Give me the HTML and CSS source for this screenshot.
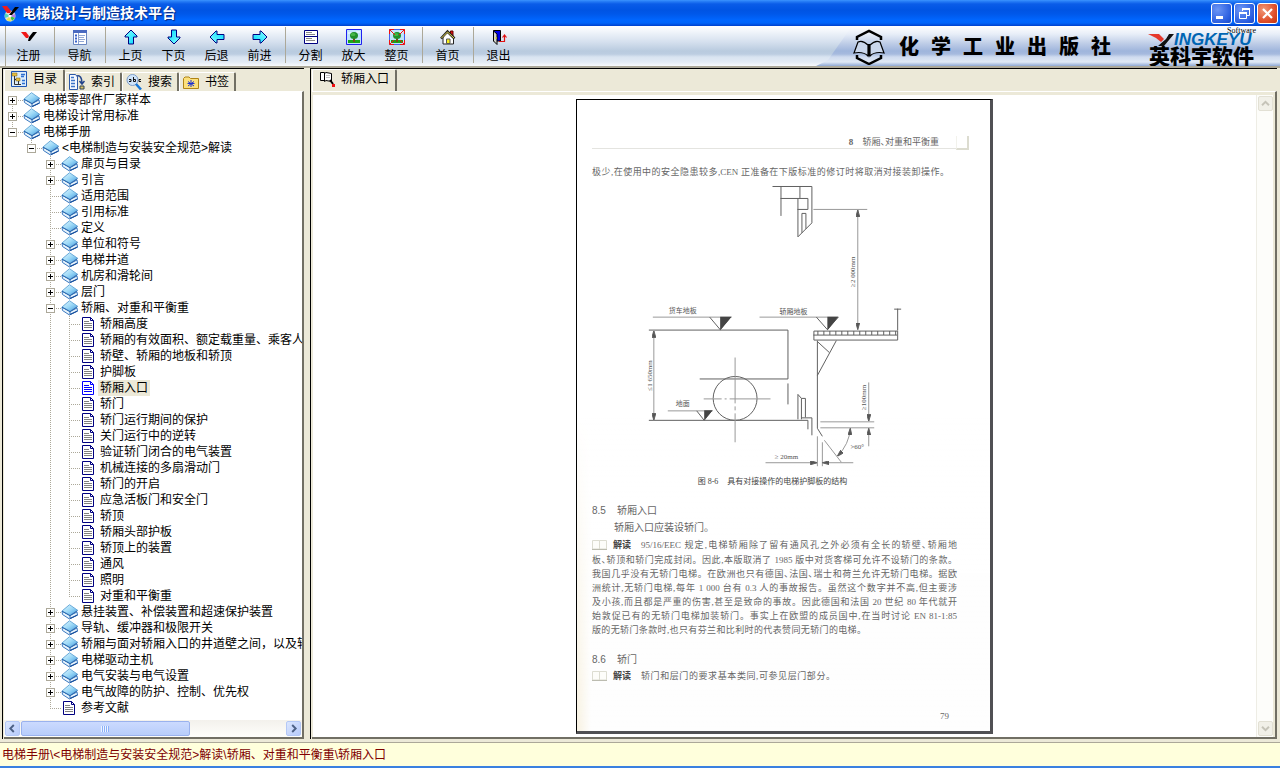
FILE: index.html
```
<!DOCTYPE html>
<html lang="zh-CN">
<head>
    <meta charset="UTF-8">
    <meta name="viewport" content="width=device-width, initial-scale=1.0">
    <title>电梯设计与制造技术平台</title>
    <link rel="stylesheet" href="styles.css">
</head>
<body>
    <!-- shared icons -->
    <svg class="defs" width="0" height="0" aria-hidden="true">
        <defs>
            <linearGradient id="cover" x1="0" y1="0" x2="1" y2="1">
                <stop offset="0" stop-color="#e4f8ff"/>
                <stop offset="0.5" stop-color="#9dd9f7"/>
                <stop offset="1" stop-color="#3f9be0"/>
            </linearGradient>
            <linearGradient id="cyan" x1="0" y1="0" x2="1" y2="1">
                <stop offset="0" stop-color="#8ff"/>
                <stop offset="1" stop-color="#00d8ff"/>
            </linearGradient>
        </defs>
        <symbol id="book" viewBox="0 0 18 16">
            <path d="M1 7 1.500 10.500 8.500 15 16.500 11 16 8 9 11.500z" fill="#e8f4fc" stroke="#3a78c0"/>
            <path d="M9 14.500 16.500 11" stroke="#174f9c" stroke-width="1.300"/>
            <path d="M8.500 0.700 16.500 6.200 9 11.200 1 7z" fill="url(#cover)" stroke="#6aaad8"/>
            <path d="M1 7.200 9 11.700 16.500 6.700M9 11.700V14.500" fill="none" stroke="#2865ad"/>
        </symbol>
        <symbol id="doc" viewBox="0 0 18 16">
            <path d="M2.500 1.500H10.500L13.500 4.500V14.500H2.500z" fill="#fff" stroke="#000080"/>
            <path d="M10.500 1.500V4.500H13.500" fill="none" stroke="#000080"/>
            <path d="M4 5.500H9M4 7.500H12M4 9.500H12M4 11.500H12" stroke="#808080"/>
        </symbol>
        <symbol id="doc-open" viewBox="0 0 18 16">
            <path d="M2.500 1.500H10.500L13.500 4.500V14.500H2.500z" fill="#fff" stroke="#0000ff"/>
            <path d="M10.500 1.500V4.500H13.500" fill="none" stroke="#0000ff"/>
            <path d="M4 5.500H9M4 7.500H12M4 9.500H12M4 11.500H12" stroke="#0000ff"/>
        </symbol>
        <symbol id="arrow" viewBox="0 0 16 16">
            <path d="M8 1 14 7V8H10.500V15H5.500V8H2V7z" fill="url(#cyan)" stroke="#000080"/>
        </symbol>
        <symbol id="tree-pic" viewBox="0 0 16 16">
            <path d="M1 1H15V15H1z" fill="#bfe4fb"/>
            <path d="M2 4H6M10 3H14" stroke="#fff"/>
            <path d="M2 11H14V14H2z" fill="#19a319"/>
            <path d="M7 8H9V13H7z" fill="#754b14"/>
            <ellipse cx="8" cy="6.500" rx="4" ry="3.500" fill="#1f8f2b"/>
            <ellipse cx="7" cy="5.500" rx="2.500" ry="1.500" fill="#45b848"/>
        </symbol>
        <symbol id="openbook" viewBox="0 0 15 10">
            <path d="M0.500 0.500H7.500V9H0.500zM7.500 0.500H14.500V9H7.500z" fill="#fdfdfa" stroke="#ddddd2"/>
            <path d="M0 9.500H15" stroke="#bcbcb0"/>
        </symbol>
    </svg>

    <header class="titlebar">
        <svg class="app-icon" viewBox="0 0 17 17">
            <circle cx="8" cy="11" r="5.500" fill="#ddd"/>
            <path d="M8 11 3 8 3 13z" fill="#4cd9c0"/>
            <path d="M8 11 4 15 9 16.500z" fill="#ece34a"/>
            <path d="M8 11 13 9 13 13z" fill="#b877e8"/>
            <path d="M8 11 10 16 13 13z" fill="#3ec43e"/>
            <circle cx="8" cy="11" r="1.500" fill="#fff"/>
            <path d="M0 1H5L9 6 8 8H5z" fill="#ee1c1c"/>
            <path d="M7 10 13 2H17L10 10z" fill="#000"/>
        </svg>
        <h1>电梯设计与制造技术平台</h1>
        <div class="window-buttons">
            <button class="win-btn" aria-label="最小化"><svg viewBox="0 0 19 19"><path d="M4 12H11V15H4z" fill="#fff"/></svg></button>
            <button class="win-btn" aria-label="还原"><svg viewBox="0 0 19 19" fill="none" stroke="#fff"><path d="M7.500 7V4.500H14.500V11.500H12"/><path d="M7 5H15" stroke-width="2"/><path d="M4.500 8.500H11.500V14.500H4.500z"/><path d="M4 9H12" stroke-width="2"/></svg></button>
            <button class="win-btn close" aria-label="关闭"><svg viewBox="0 0 19 19"><path d="M5 5 14 14M14 5 5 14" stroke="#fff" stroke-width="2.200"/></svg></button>
        </div>
    </header>

    <nav class="toolbar">
        <div class="tools">
            <button class="tool"><svg viewBox="0 0 16 16"><path d="M0 3H5L8 7 7 9H5z" fill="#f01818"/><path d="M7 12 8 8 12 3H16L9 12z" fill="#000"/></svg>注册</button>
            <span class="sep"></span>
            <button class="tool"><svg viewBox="0 0 16 16"><path d="M1.500 1.500H14.500V15.500H1.500z" fill="#fff" stroke="#6a86c0"/><path d="M1 1H15V4H1z" fill="#4a6ac0"/><path d="M3 6.500H5M3 9.500H5M3 12.500H5" stroke="#3a62c8" stroke-width="2"/><path d="M7 6.500H13M7 8.500H12M7 10.500H13M7 12.500H12" stroke="#92a8d4"/><path d="M6.500 4V15" stroke="#8ea4d0"/></svg>导航</button>
            <span class="sep"></span>
            <button class="tool"><svg viewBox="0 0 16 16"><use href="#arrow"/></svg>上页</button>
            <button class="tool"><svg class="down" viewBox="0 0 16 16"><use href="#arrow"/></svg>下页</button>
            <button class="tool"><svg class="left" viewBox="0 0 16 16"><use href="#arrow"/></svg>后退</button>
            <button class="tool"><svg class="right" viewBox="0 0 16 16"><use href="#arrow"/></svg>前进</button>
            <span class="sep"></span>
            <button class="tool"><svg viewBox="0 0 16 16"><path d="M1.500 1.500H14.500V14.500H1.500zM1 7.500H15" fill="#fff" stroke="#000080"/><path d="M3 3.500H9M3 5.500H12M3 9.500H9M3 11.500H12" stroke="#888"/></svg>分割</button>
            <button class="tool"><svg viewBox="0 0 16 16"><use href="#tree-pic"/><path d="M0.500 0.500H15.500V15.500H0.500z" fill="none" stroke="#2020f0"/></svg>放大</button>
            <button class="tool"><svg viewBox="0 0 16 16"><use href="#tree-pic"/><path d="M0.500 0.500H15.500V15.500H0.500z" fill="none" stroke="#4060f0"/><path d="M0.500 5V0.500H5M11 0.500H15.500V5M15.500 11V15.500H11M5 15.500H0.500V11M1 1 6 6M15 1 10 6M1 15 5 11M15 15 11 11" fill="none" stroke="#f01010"/></svg>整页</button>
            <span class="sep"></span>
            <button class="tool"><svg viewBox="0 0 16 16"><path d="M10.500 2H13V7L10.500 5z" fill="#e01010" stroke="#600"/><path d="M3 8V15H13.500V8L8 3z" fill="#fff" stroke="#222"/><path d="M1 9.500 7.500 2.500 14.500 9.500" fill="none" stroke="#222" stroke-width="2.500"/><path d="M1.500 9 7.500 3 14 9" fill="none" stroke="#e8dc50"/><path d="M6.500 14.500V10H10V14.500z" fill="#f4ee20" stroke="#555"/></svg>首页</button>
            <span class="sep"></span>
            <button class="tool"><svg viewBox="0 0 16 16"><path d="M2.500 1.500H9.500V12H2.500z" fill="#0000e8" stroke="#000"/><path d="M2.500 2 6 5V15.500L2.500 12z" fill="#d4d4cc" stroke="#000"/><path d="M5 8V10" stroke="#f0e000"/><path d="M8 12.500H13.500V7M11.500 8.500 13.500 6 15.500 8.500" fill="none" stroke="#e01010" stroke-width="1.200"/></svg>退出</button>
        </div>
        <div class="banner">
            <svg class="press-logo" viewBox="0 0 32 36" fill="none" stroke="#000">
                <path d="M4 11V8L16 2 28 8V11M4 26V29L16 35 28 29V26" stroke-width="2.500"/>
                <path d="M15 27V16C11 12 7 12 5 13L1 24C6 23 11 23 15 27zM17 27V16C21 12 25 12 27 13L31 24C26 23 21 23 17 27z" fill="#c9d6eb" stroke-width="1.200"/>
                <path d="M16 15V27" stroke-width="2"/>
            </svg>
            <div class="press-name"><span>化</span><span>学</span><span>工</span><span>业</span><span>出</span><span>版</span><span>社</span></div>
            <div class="brand">
                <span class="brand-soft">Software</span>
                <div class="brand-latin">
                    <svg viewBox="0 0 26 12"><path d="M0 0H11L16 5 13 8 8 4z" fill="#e5382b"/><path d="M10 12 18 5 21 0H26L16 12z" fill="#111"/></svg>
                    <span>INGKEYU</span>
                </div>
                <span class="brand-cn">英科宇软件</span>
            </div>
        </div>
    </nav>

    <main class="workspace">
        <aside class="panel side">
            <div class="tabs" role="tablist">
                <button class="tab active" role="tab"><svg viewBox="0 0 16 16"><path d="M0.500 0.500H15.500V15.500H0.500z" fill="#dcecfb" stroke="#1c54b4"/><path d="M1 2H6V5H1zM5 7H9V10H5z" fill="#e8c040" stroke="#76621a" stroke-width=".5"/><path d="M3.500 5V13.500H10M7.500 10V13M5 8.500H3.500" fill="none" stroke="#333"/><path d="M10 3.500H14M10 5.500H13M11 9.500H14M11 12.500H14" stroke="#2c6fd0" stroke-width="1.500"/></svg>目录</button>
                <button class="tab" role="tab"><svg viewBox="0 0 16 16"><path d="M0.500 0.500H6.500L8.500 3V15.500H0.500z" fill="#f4f8ff" stroke="#2c58a8"/><path d="M2 3.500H5M2 6.500H6M2 9.500H6M2 12.500H6" stroke="#3c74c8" stroke-width="1.500"/><path d="M8 2C11 1 13 4 13 9M10.500 7 13 10 15.500 7" fill="none" stroke="#24458c" stroke-width="1.500"/><path d="M11 12H15V15H11z" fill="#d8c060" stroke="#345"/></svg>索引</button>
                <button class="tab" role="tab"><svg viewBox="0 0 16 16"><circle cx="6.500" cy="6" r="5.500" fill="#cfe4fa" stroke="#7d9cc8"/><path d="M10 10 15 15.500" stroke="#1878d8" stroke-width="2.500"/><path d="M3 7.500H5V5.500H3M7.500 3V7.500H9.500V5.500H7.500M15 5.500H13V7.500H15" fill="none" stroke="#111"/></svg>搜索</button>
                <button class="tab" role="tab"><svg viewBox="0 0 16 16"><path d="M0.500 14.500V4.500L2 3H6L7.500 4.500H15.500V14.500z" fill="#fbe07c" stroke="#b08414"/><path d="M8 6V13M5 7.500 11 12M11 7.500 5 12M4.500 9.500H11.500" stroke="#1c30d0"/></svg>书签</button>
            </div>
            <div class="page">
                <ul class="tree">
                    <li><div class="row"><button class="toggle plus" aria-label="展开"></button><svg><use href="#book"/></svg><a href="#">电梯零部件厂家样本</a></div></li>
                    <li><div class="row"><button class="toggle plus" aria-label="展开"></button><svg><use href="#book"/></svg><a href="#">电梯设计常用标准</a></div></li>
                    <li><div class="row"><button class="toggle" aria-label="折叠"></button><svg><use href="#book"/></svg><a href="#">电梯手册</a></div>
                        <ul>
                            <li><div class="row"><button class="toggle" aria-label="折叠"></button><svg><use href="#book"/></svg><a href="#">&lt;电梯制造与安装安全规范&gt;解读</a></div>
                                <ul>
                                    <li><div class="row"><button class="toggle plus" aria-label="展开"></button><svg><use href="#book"/></svg><a href="#">扉页与目录</a></div></li>
                                    <li><div class="row"><button class="toggle plus" aria-label="展开"></button><svg><use href="#book"/></svg><a href="#">引言</a></div></li>
                                    <li><div class="row leaf"><svg><use href="#book"/></svg><a href="#">适用范围</a></div></li>
                                    <li><div class="row leaf"><svg><use href="#book"/></svg><a href="#">引用标准</a></div></li>
                                    <li><div class="row leaf"><svg><use href="#book"/></svg><a href="#">定义</a></div></li>
                                    <li><div class="row"><button class="toggle plus" aria-label="展开"></button><svg><use href="#book"/></svg><a href="#">单位和符号</a></div></li>
                                    <li><div class="row"><button class="toggle plus" aria-label="展开"></button><svg><use href="#book"/></svg><a href="#">电梯井道</a></div></li>
                                    <li><div class="row"><button class="toggle plus" aria-label="展开"></button><svg><use href="#book"/></svg><a href="#">机房和滑轮间</a></div></li>
                                    <li><div class="row"><button class="toggle plus" aria-label="展开"></button><svg><use href="#book"/></svg><a href="#">层门</a></div></li>
                                    <li><div class="row"><button class="toggle" aria-label="折叠"></button><svg><use href="#book"/></svg><a href="#">轿厢、对重和平衡重</a></div>
                                        <ul>
                                            <li><div class="row leaf"><svg><use href="#doc"/></svg><a href="#">轿厢高度</a></div></li>
                                            <li><div class="row leaf"><svg><use href="#doc"/></svg><a href="#">轿厢的有效面积、额定载重量、乘客人数</a></div></li>
                                            <li><div class="row leaf"><svg><use href="#doc"/></svg><a href="#">轿壁、轿厢的地板和轿顶</a></div></li>
                                            <li><div class="row leaf"><svg><use href="#doc"/></svg><a href="#">护脚板</a></div></li>
                                            <li><div class="row leaf"><svg><use href="#doc-open"/></svg><a href="#" class="selected">轿厢入口</a></div></li>
                                            <li><div class="row leaf"><svg><use href="#doc"/></svg><a href="#">轿门</a></div></li>
                                            <li><div class="row leaf"><svg><use href="#doc"/></svg><a href="#">轿门运行期间的保护</a></div></li>
                                            <li><div class="row leaf"><svg><use href="#doc"/></svg><a href="#">关门运行中的逆转</a></div></li>
                                            <li><div class="row leaf"><svg><use href="#doc"/></svg><a href="#">验证轿门闭合的电气装置</a></div></li>
                                            <li><div class="row leaf"><svg><use href="#doc"/></svg><a href="#">机械连接的多扇滑动门</a></div></li>
                                            <li><div class="row leaf"><svg><use href="#doc"/></svg><a href="#">轿门的开启</a></div></li>
                                            <li><div class="row leaf"><svg><use href="#doc"/></svg><a href="#">应急活板门和安全门</a></div></li>
                                            <li><div class="row leaf"><svg><use href="#doc"/></svg><a href="#">轿顶</a></div></li>
                                            <li><div class="row leaf"><svg><use href="#doc"/></svg><a href="#">轿厢头部护板</a></div></li>
                                            <li><div class="row leaf"><svg><use href="#doc"/></svg><a href="#">轿顶上的装置</a></div></li>
                                            <li><div class="row leaf"><svg><use href="#doc"/></svg><a href="#">通风</a></div></li>
                                            <li><div class="row leaf"><svg><use href="#doc"/></svg><a href="#">照明</a></div></li>
                                            <li><div class="row leaf"><svg><use href="#doc"/></svg><a href="#">对重和平衡重</a></div></li>
                                        </ul>
                                    </li>
                                    <li><div class="row"><button class="toggle plus" aria-label="展开"></button><svg><use href="#book"/></svg><a href="#">悬挂装置、补偿装置和超速保护装置</a></div></li>
                                    <li><div class="row"><button class="toggle plus" aria-label="展开"></button><svg><use href="#book"/></svg><a href="#">导轨、缓冲器和极限开关</a></div></li>
                                    <li><div class="row"><button class="toggle plus" aria-label="展开"></button><svg><use href="#book"/></svg><a href="#">轿厢与面对轿厢入口的井道壁之间，以及轿厢</a></div></li>
                                    <li><div class="row"><button class="toggle plus" aria-label="展开"></button><svg><use href="#book"/></svg><a href="#">电梯驱动主机</a></div></li>
                                    <li><div class="row"><button class="toggle plus" aria-label="展开"></button><svg><use href="#book"/></svg><a href="#">电气安装与电气设置</a></div></li>
                                    <li><div class="row"><button class="toggle plus" aria-label="展开"></button><svg><use href="#book"/></svg><a href="#">电气故障的防护、控制、优先权</a></div></li>
                                    <li><div class="row leaf"><svg><use href="#doc"/></svg><a href="#">参考文献</a></div></li>
                                </ul>
                            </li>
                        </ul>
                    </li>
                </ul>
                <div class="hscroll">
                    <button class="scroll-btn" aria-label="向左"><svg viewBox="0 0 15 15"><path d="M9 3.500 5 7.500 9 11.500" fill="none" stroke="#4d6185" stroke-width="2.200"/></svg></button>
                    <div class="thumb"><span></span></div>
                    <button class="scroll-btn end" aria-label="向右"><svg viewBox="0 0 15 15"><path d="M6 3.500 10 7.500 6 11.500" fill="none" stroke="#4d6185" stroke-width="2.200"/></svg></button>
                </div>
            </div>
        </aside>

        <section class="panel reader">
            <div class="tabs" role="tablist">
                <button class="tab active" role="tab"><svg viewBox="0 0 16 16"><path d="M1.500 1.500H5.500V9.500H1.500zM5.500 2.500 7 1.500 12.500 2.500V10.500L7 9.500 5.500 10.500z" fill="#fff" stroke="#000"/><path d="M7.500 4.500H11M7.500 6.500H11" stroke="#888" stroke-dasharray="1 1"/><path d="M11 9 14 13" stroke="#000" stroke-width="2"/><path d="M13 13H16V16H13z" fill="#f01010"/></svg>轿厢入口</button>
            </div>
            <div class="page">
                <div class="viewer">
                    <article class="sheet">
                        <div class="running-head"><span class="chapter"><b>8</b> 轿厢<span class="tight">、</span>对重和平衡重</span><i class="corner"></i></div>
                        <p class="line lead">极少,在使用中的安全隐患较多,CEN 正准备在下版标准的修订时将取消对接装卸操作。</p>
                        <figure>
                            <svg class="drawing" viewBox="592 182 366 290">
                                <defs>
                                    <marker id="tip" viewBox="0 0 7 4" refX="7" refY="2" markerWidth="7" markerHeight="4" orient="auto-start-reverse" markerUnits="userSpaceOnUse"><path d="M0 0 7 2 0 4z" fill="#555"/></marker>
                                </defs>
                                <!-- door head -->
                                <path d="M773 186.500H812.500V223L798.500 237V198.500M781.500 186V216M781 198.500H808.500V209.500H798M800.500 186V198M802.500 233V213.500H806.500V229"/>
                                <path class="thin" d="M814 209.500H868"/>
                                <path class="thin" d="M858.500 210V330" marker-start="url(#tip)" marker-end="url(#tip)"/>
                                <!-- level marks -->
                                <path class="thin" d="M653 317.500H732M760 317.500H839M668 411.500H713"/>
                                <path d="M710 317.500 720.500 330 731 317.500M817 317.500 828 330 839 317.500M697 411.500 704.500 421 712 411.500"/>
                                <path class="solid" d="M720.500 317V331L732 317zM828 317V331L839 317zM704.500 411V421L713 411z"/>
                                <!-- truck and ground -->
                                <path d="M649 330.500H788.500V379.500H700M788.500 384V405M649 421H808.500V430"/>
                                <circle cx="735.500" cy="399" r="22"/>
                                <path class="thin" d="M735.500 358V404M735.500 407V411M735.500 414V443M704 399.500H722M725 399.500H727M730 399.500H771"/>
                                <path class="thin" d="M654 331V421" marker-start="url(#tip)" marker-end="url(#tip)"/>
                                <path d="M798.500 420V395L802 399H806V418M802 399V420M802 418.500H812.500V436"/>
                                <!-- car floor and apron -->
                                <path d="M814.500 331.500H898.500V340.500H814.500zM814 335.500H898M898.500 331V309M895 309.500H902"/>
                                <path d="M818 333.500H898" stroke-width="4" stroke-dasharray="1 5"/>
                                <path d="M818 341V429L823 437M837 341 818 376M818 342 830 353"/>
                                <path class="thin" d="M825 441 842 463M821 422.500H875M821 428.500H875M818 437V467M823 443V467"/>
                                <path class="thin" d="M869.500 383V422" marker-end="url(#tip)"/>
                                <path class="thin" d="M869.500 447V429" marker-end="url(#tip)"/>
                                <path class="thin" d="M851 429Q850 445 838 457" marker-start="url(#tip)" marker-end="url(#tip)"/>
                                <path class="thin" d="M766 463.500H818" marker-end="url(#tip)"/>
                                <path class="thin" d="M854 463.500H823" marker-end="url(#tip)"/>
                                <g class="marks">
                                    <text x="683" y="313">货车地板</text>
                                    <text x="794" y="314">轿厢地板</text>
                                    <text x="683" y="407">地面</text>
                                    <text x="787" y="460">≥ 20mm</text>
                                    <text x="858" y="450">&gt;60°</text>
                                    <text transform="translate(856 272) rotate(-90)">≥2 000mm</text>
                                    <text transform="translate(652 376) rotate(-90)">≤1 650mm</text>
                                    <text transform="translate(867 398) rotate(-90)">≥100mm</text>
                                </g>
                            </svg>
                            <figcaption><span>图 8-6</span><span>具有对接操作的电梯护脚板的结构</span></figcaption>
                        </figure>
                        <h2><span>8.5</span><span>轿厢入口</span></h2>
                        <p class="rule">轿厢入口应装设轿门。</p>
                        <div class="note">
                            <svg viewBox="0 0 15 10"><use href="#openbook"/></svg><b>解读</b>
                            <p class="line">95/16/EEC 规定,电梯轿厢除了留有通风孔之外必须有全长的轿壁<span class="tight">、</span>轿厢地</p>
                        </div>
                        <p class="line">板<span class="tight">、</span>轿顶和轿门完成封闭。因此,本版取消了 1985 版中对货客梯可允许不设轿门的条款。</p>
                        <p class="line">我国几乎没有无轿门电梯。在欧洲也只有德国<span class="tight">、</span>法国<span class="tight">、</span>瑞士和荷兰允许无轿门电梯。据欧</p>
                        <p class="line">洲统计,无轿门电梯,每年 1 000 台有 0.3 人的事故报告。虽然这个数字并不高,但主要涉</p>
                        <p class="line">及小孩,而且都是严重的伤害,甚至是致命的事故。因此德国和法国 20 世纪 80 年代就开</p>
                        <p class="line">始敦促已有的无轿门电梯加装轿门。事实上在欧盟的成员国中,在当时讨论 EN 81-1:85</p>
                        <p class="line last">版的无轿门条款时,也只有芬兰和比利时的代表赞同无轿门的电梯。</p>
                        <h2><span>8.6</span><span>轿门</span></h2>
                        <div class="note">
                            <svg viewBox="0 0 15 10"><use href="#openbook"/></svg><b>解读</b>
                            <p class="line short">轿门和层门的要求基本类同,可参见层门部分。</p>
                        </div>
                        <div class="folio">79</div>
                    </article>
                </div>
                <div class="vscroll">
                    <button class="scroll-btn off" aria-label="向上" disabled><svg viewBox="0 0 15 15"><path d="M3.500 9.500 7.500 5.500 11.500 9.500" fill="none" stroke="#c5c3b8" stroke-width="2.200"/></svg></button>
                    <button class="scroll-btn off" aria-label="向下" disabled><svg viewBox="0 0 15 15"><path d="M3.500 5.500 7.500 9.500 11.500 5.500" fill="none" stroke="#c5c3b8" stroke-width="2.200"/></svg></button>
                </div>
            </div>
        </section>
    </main>

    <footer class="status">电梯手册\&lt;电梯制造与安装安全规范&gt;解读\轿厢、对重和平衡重\轿厢入口</footer>
</body>
</html>
```
FILE: styles.css
```
* {
    box-sizing: border-box;
}

body {
    display: flex;
    flex-direction: column;
    height: 100vh;
    margin: 0;
    overflow: hidden;
    background: #ece9d8;
    color: #000;
    font: 12px/16px "Liberation Sans", "Noto Sans CJK SC", sans-serif;
}

button {
    padding: 0;
    border: none;
    background: none;
    color: inherit;
    font: inherit;
}

svg {
    display: block;
    flex: none;
}

.defs {
    position: absolute;
}

/* title bar */
.titlebar {
    display: flex;
    align-items: center;
    flex: none;
    height: 26px;
    padding: 0 2px;
    background: linear-gradient(#3d95ff 0, #2b82f8 1px, #0a5ce8 4px, #0054e3 10px, #0058ea 14px, #0066ff 20px, #0064fa 23px, #0040cc 26px);
}

.app-icon {
    width: 17px;
    height: 17px;
}

.titlebar h1 {
    flex: 1;
    margin: 0 0 0 3px;
    color: #fff;
    font-size: 14px;
    font-weight: bold;
    text-shadow: 1px 1px 1px #0a2a80;
}

.window-buttons {
    display: flex;
    gap: 2px;
}

.win-btn {
    width: 21px;
    height: 21px;
    border: 1px solid #fff;
    border-radius: 3px;
    background: radial-gradient(circle at 30% 30%, #6d96f5, #2a5ee0 70%, #1a48c4);
}

.win-btn.close {
    background: radial-gradient(circle at 30% 30%, #f09878, #e0502c 60%, #c03410);
}

/* toolbar */
.toolbar {
    display: flex;
    justify-content: space-between;
    flex: none;
    height: 42px;
    padding-left: 5px;
    border-bottom: 2px solid #aca899;
    background: linear-gradient(#fff 0, #f2f6fb 5px, #d5e0ee 16px, #b9cbdf 25px, #bccde1 28px, #d9e4f1 31px, #e3ebf5 36px, #f8fafd 40px);
}

.tools {
    display: flex;
    border-left: 1px solid #aca899;
    padding-left: 1px;
}

.tool {
    display: flex;
    flex-direction: column;
    align-items: center;
    gap: 3px;
    width: 43px;
    padding-top: 3px;
}

.tool svg {
    width: 16px;
    height: 16px;
}

.down {
    transform: rotate(180deg);
}

.left {
    transform: rotate(-90deg);
}

.right {
    transform: rotate(90deg);
}

.sep {
    width: 1px;
    height: 36px;
    margin: 1px 3px 0 4px;
    background: #aca899;
}

.banner {
    display: flex;
    align-items: center;
    width: 464px;
    padding: 2px 18px 0 37px;
    background: linear-gradient(#fff 0, #e8eef8 8px, #bccbe6 18px, #9fb5dc 25px, #a6bade 28px, #cfdbef 31px, #dfe8f5 36px, #8fa9d6 40px);
    clip-path: polygon(36px 0, 100% 0, 100% 100%, 0 100%, 12px 85%);
}

.press-logo {
    width: 32px;
    height: 36px;
}

.press-name {
    display: flex;
    flex: 1;
    gap: 12px;
    padding-left: 14px;
    font-size: 20px;
    font-weight: 900;
}

.brand {
    display: flex;
    flex-direction: column;
    width: 114px;
}

.brand-soft {
    align-self: flex-end;
    margin-right: 6px;
    font: 8px/5px "Liberation Serif", serif;
}

.brand-latin {
    display: flex;
    align-items: center;
    color: #0065b3;
    font-size: 17px;
    font-weight: bold;
    font-style: italic;
    line-height: 14px;
}

.brand-latin svg {
    width: 26px;
    height: 12px;
}

.brand-cn {
    margin-left: 1px;
    font-size: 21px;
    font-weight: 900;
    line-height: 20px;
}

/* panels */
.workspace {
    display: flex;
    flex: 1;
    gap: 6px;
    min-height: 0;
    padding: 0 3px 0 2px;
}

.panel {
    display: flex;
    flex-direction: column;
    min-width: 0;
    padding-left: 1px;
    border-top: 1px solid #000;
    border-left: 1px solid #000;
}

.side {
    flex: 0 0 302px;
}

.reader {
    flex: 1;
}

.tabs {
    display: flex;
    align-items: flex-end;
    height: 22px;
}

.tab {
    display: flex;
    align-items: center;
    gap: 6px;
    height: 19px;
    padding: 0 5px 0 3px;
    border-top: 1px solid #fff;
    border-left: 1px solid #fff;
    border-right: 2px solid #716f64;
    border-radius: 2px 2px 0 0;
}

.tab.active {
    height: 22px;
    padding: 0 6px 3px 6px;
}

.tab svg {
    width: 16px;
    height: 16px;
}

.page {
    display: flex;
    flex: 1;
    min-height: 0;
    border-top: 1px solid #fff;
    border-right: 2px solid #716f64;
    border-bottom: 2px solid #716f64;
}

.side .page {
    flex-direction: column;
    background: #fff;
}

.reader .page {
    padding: 3px 2px 0 1px;
}

/* contents tree */
.tree {
    flex: 1;
    margin: 0;
    padding: 0 0 0 4px;
    overflow: hidden;
    list-style: none;
    white-space: nowrap;
}

.tree ul {
    margin: 0;
    padding: 0 0 0 19px;
    list-style: none;
}

.tree li {
    background: repeating-linear-gradient(#aca899 0 1px, transparent 1px 2px) 4px 0 / 1px 100% no-repeat;
}

.tree > li:first-child {
    background-position: 4px 8px;
}

.tree li:last-child {
    background-size: 1px 8px;
}

.row {
    display: flex;
    align-items: center;
    height: 16px;
    background: repeating-linear-gradient(90deg, #aca899 0 1px, transparent 1px 2px) 4px 8px / 12px 1px no-repeat;
}

.row.leaf {
    padding-left: 15px;
}

.row svg {
    width: 18px;
    height: 16px;
}

.row a {
    padding: 0 2px;
    color: #000;
    text-decoration: none;
}

.row a.selected {
    background: #ece9d8;
}

.toggle {
    flex: none;
    width: 9px;
    height: 9px;
    margin-right: 6px;
    border: 1px solid #aca899;
    background: linear-gradient(#000, #000) center / 5px 1px no-repeat, #fff;
}

.toggle.plus {
    background: linear-gradient(#000, #000) center / 5px 1px no-repeat, linear-gradient(#000, #000) center / 1px 5px no-repeat, #fff;
}

/* scrollbars */
.hscroll {
    display: flex;
    gap: 1px;
    height: 17px;
    padding: 0 1px;
    background: linear-gradient(#f3f1ec, #fefefb);
}

.vscroll {
    display: flex;
    flex-direction: column;
    justify-content: space-between;
    width: 17px;
    padding: 1px 0 1px 1px;
    background: #fdfdfa;
    border-left: 1px solid #eeede5;
}

.scroll-btn {
    width: 15px;
    height: 15px;
    margin-top: 1px;
    border: 1px solid #b4c8f6;
    border-radius: 2px;
    background: linear-gradient(135deg, #dbe6fe, #b6cafa);
}

.scroll-btn.end {
    margin-left: auto;
}

.scroll-btn.off {
    margin: 0;
    border-color: #e2e0d4;
    background: #f1f0e8;
}

.thumb {
    display: flex;
    align-items: center;
    justify-content: center;
    width: 57%;
    height: 15px;
    margin-top: 1px;
    border: 1px solid #9ab2ee;
    border-radius: 2px;
    background: linear-gradient(#cbdafe, #b8cdfb);
}

.thumb span {
    width: 8px;
    height: 6px;
    background: repeating-linear-gradient(90deg, #eef4fe 0 1px, #8cb0f8 1px 2px);
}

/* scanned sheet */
.viewer {
    display: flex;
    justify-content: center;
    align-items: flex-start;
    flex: 1;
    padding-top: 4px;
    background: #fff;
}

.sheet {
    width: 417px;
    padding: 36px 33px 8px 15px;
    border: solid #505054;
    border-width: 1px 3px 3px 1px;
    border-top-color: #000;
    border-left-color: #000;
    background: linear-gradient(#fff 50%, transparent), linear-gradient(90deg, #f8f2e2, #fefefe 14px);
    color: #666;
    font: 9px/14px "Liberation Serif", "Noto Sans CJK SC", serif;
}

.tight {
    font-feature-settings: "palt";
}

.running-head {
    display: flex;
    justify-content: flex-end;
    gap: 17px;
    height: 13px;
    margin-right: -12px;
    font-size: 9px;
    line-height: 12px;
    background: linear-gradient(#e4e4e0, #e4e4e0) 0 100% / 366px 1px no-repeat;
}

.chapter b {
    margin-right: 7px;
}

.corner {
    width: 13px;
    height: 14px;
    border-right: 2px solid #dcdcd0;
    border-bottom: 2px solid #dcdcd0;
    border-left: 1px solid #f2f2ec;
}

.line {
    margin: 0;
    text-align: justify;
    text-align-last: justify;
    white-space: nowrap;
}

.lead {
    margin: 16px 8px 3px 0;
}

.last {
    margin-right: 91px;
}

.sheet figure {
    margin: 0;
}

.drawing {
    width: 100%;
    fill: none;
    stroke: #606060;
    stroke-width: 1;
}

.drawing .thin {
    stroke: #999;
}

.drawing .solid {
    fill: #444;
    stroke: none;
}

.marks {
    fill: #555;
    stroke: none;
    font-size: 7px;
    text-anchor: middle;
}

figcaption {
    display: flex;
    justify-content: center;
    gap: 9px;
    margin: 4px 4px 14px 0;
    color: #444;
    font-size: 8px;
}

.sheet h2 {
    display: flex;
    gap: 11px;
    margin: 0;
    font: 10px/16px "Liberation Sans", "Noto Sans CJK SC", sans-serif;
}

.rule {
    margin: 0 0 0 22px;
    font-size: 10px;
    line-height: 18px;
}

.note {
    display: flex;
    align-items: center;
    height: 16px;
}

.note svg {
    width: 15px;
    height: 10px;
    margin-right: 6px;
}

.note b {
    margin-right: 10px;
    color: #444;
}

.note .line {
    flex: 1;
}

.note .short {
    flex: 0 0 194px;
}

.last + h2 {
    margin-top: 15px;
}

.folio {
    margin: 25px 8px 0 0;
    text-align: right;
}

.status {
    flex: none;
    height: 26px;
    margin-top: 3px;
    padding: 4px 0 0 2px;
    border-top: 1px solid #aca899;
    border-bottom: 2px solid #3a80e0;
    background: #ffffdc;
    color: #800000;
}
```
